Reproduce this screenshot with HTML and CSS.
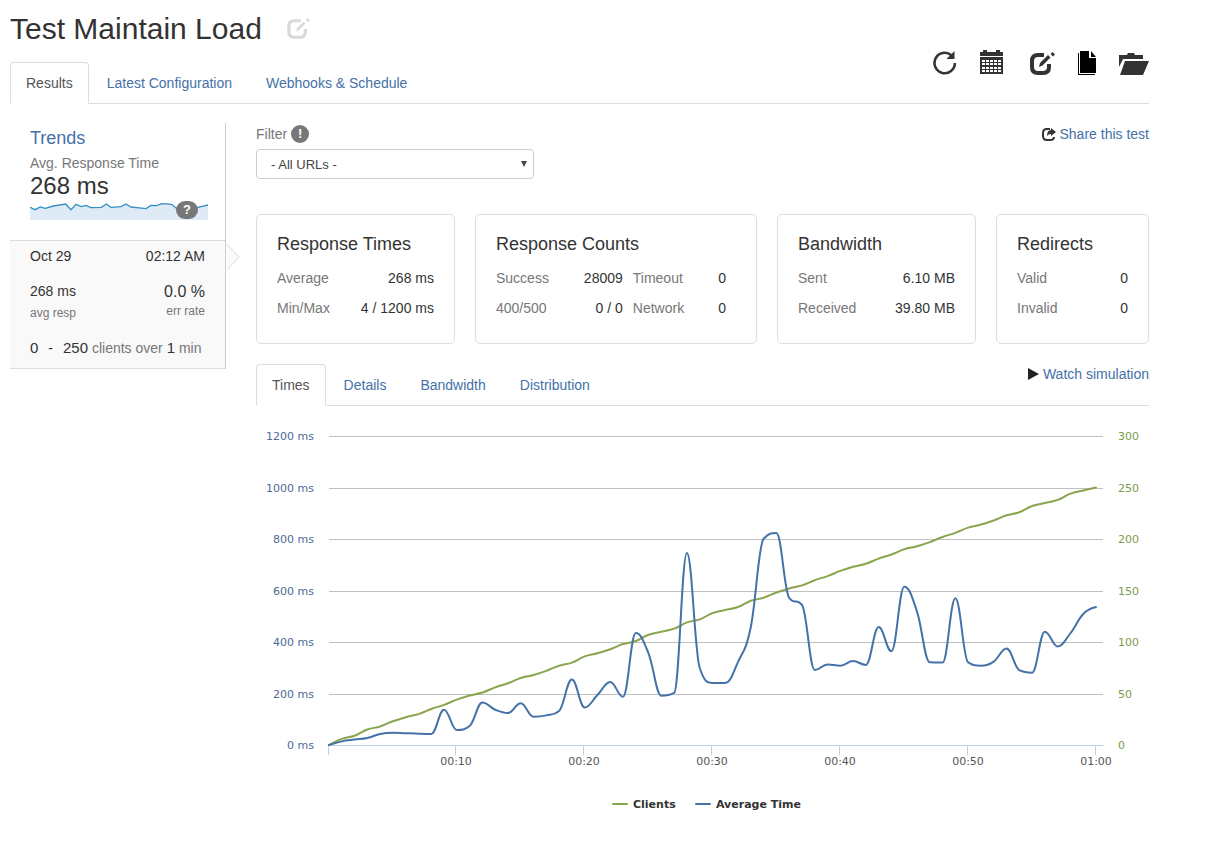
FILE: index.html
```html
<!DOCTYPE html>
<html lang="en">
<head>
<meta charset="utf-8">
<meta name="viewport" content="width=device-width, initial-scale=1">
<title>Test Maintain Load</title>
<link rel="stylesheet" href="styles.css">
</head>
<body>
<header class="page-header">
  <div class="title-row">
    <h1 class="title">Test Maintain Load</h1>
    <button class="icon-button icon-button--muted" type="button" aria-label="Edit name">
      <svg class="icon" width="25" height="22" viewBox="0 0 25 24"><path d="M15 3H8Q2 3 2 9v6q0 6 6 6h6q6 0 6-6v-3" fill="none" stroke="currentColor" stroke-width="3.500"/><path d="M10 15l1-4 7-7 2 2-7 7zM20.500 2l2-2 2.500 2.500-2 2z" fill="currentColor"/></svg>
    </button>
  </div>
  <div class="nav-row">
    <nav class="tabs">
      <a class="tab tab--active" href="#results">Results</a>
      <a class="tab" href="#config">Latest Configuration</a>
      <a class="tab" href="#webhooks">Webhooks &amp; Schedule</a>
    </nav>
    <div class="tools">
      <button class="icon-button" type="button" aria-label="Rerun">
        <svg class="icon" width="24" height="26" viewBox="0 0 24 26"><path d="M21.900 13A10.200 10.200 0 1 1 18.300 5.200" fill="none" stroke="currentColor" stroke-width="2.600"/><path d="M21.500 1v8h-8z" fill="currentColor"/></svg>
      </button>
      <button class="icon-button" type="button" aria-label="Calendar">
        <svg class="icon" width="24" height="26" viewBox="0 0 24 26"><path d="M0 2h3V0h4v2h9V0h4v2h3v4H0zM0 7h23v17H0z" fill="currentColor"/><path d="M2 10h3v2H2zM6 10h3v2H6zM10 10h3v2h-3zM14 10h3v2h-3zM18 10h3v2h-3zM2 13h3v2H2zM6 13h3v2H6zM10 13h3v2h-3zM14 13h3v2h-3zM18 13h3v2h-3zM2 17h3v2H2zM6 17h3v2H6zM10 17h3v2h-3zM14 17h3v2h-3zM18 17h3v2h-3zM2 20h3v2H2zM6 20h3v2H6zM10 20h3v2h-3zM14 20h3v2h-3zM18 20h3v2h-3z" fill="#fff"/></svg>
      </button>
      <button class="icon-button" type="button" aria-label="Edit test">
        <svg class="icon" width="28" height="26" viewBox="-3 0 28 26"><path d="M14 5H8Q2 5 2 11v6q0 6 6 6h5q6 0 6-6v-3" fill="none" stroke="currentColor" stroke-width="4"/><path d="M9 17l1-4 8-8 2.500 2.500-8 8zM20.500 4l2-2 2.500 2.500-2 2z" fill="currentColor"/></svg>
      </button>
      <button class="icon-button icon-button--black" type="button" aria-label="Copy test">
        <svg class="icon" width="18" height="26" viewBox="0 0 18 26"><path d="M2 1h9v7h7v15H2zM13 1l5 6h-5zM0 3h1v21h16v1H0z" fill="currentColor"/></svg>
      </button>
      <button class="icon-button" type="button" aria-label="Open folder">
        <svg class="icon" width="30" height="26" viewBox="0 0 30 26"><path d="M0 17V5h8l1-2h6l1 2h8v4H4zM6 11h24l-6 14H1z" fill="currentColor"/></svg>
      </button>
    </div>
  </div>
</header>

<div class="layout">
  <aside class="sidebar">
    <section class="trends">
      <h2 class="trends-title"><a href="#trends">Trends</a></h2>
      <div class="muted">Avg. Response Time</div>
      <div class="trends-value">268 ms</div>
      <div class="spark-wrap">
        <svg class="spark" viewBox="0 0 534 54" preserveAspectRatio="none">
          <path d="M0 16L15 23 31 15 46 19 70 12 107 6 123 23 138 7 153 14 168 10 183 17 214 16 229 6 243 16 273 14 288 6 303 15 348 20 363 10 380 11 395 5 425 7 445 24 470 30 504 16 534 9V54H0z" fill="#deeaf5"/>
          <path d="M0 16L15 23 31 15 46 19 70 12 107 6 123 23 138 7 153 14 168 10 183 17 214 16 229 6 243 16 273 14 288 6 303 15 348 20 363 10 380 11 395 5 425 7 445 24 470 30 504 16 534 9" fill="none" stroke="#3690c0" stroke-width="4"/>
        </svg>
        <span class="badge badge--help">?</span>
      </div>
    </section>
    <section class="run">
      <div class="run-row"><span>Oct 29</span><span>02:12 AM</span></div>
      <div class="run-row run-row--stats">
        <div><div class="run-avg">268 ms</div><div class="small muted">avg resp</div></div>
        <div class="run-err"><div class="run-rate">0.0 %</div><div class="small muted">err rate</div></div>
      </div>
      <div class="run-load"><span class="num">0</span><span>-</span><span><span class="num">250</span> <span class="muted">clients over</span> <span class="num">1</span> <span class="muted">min</span></span></div>
      <svg class="run-arrow" width="15" height="28" viewBox="0 0 15 28"><path d="M2 1L14 14 2 27" fill="#f9f9f9" stroke="#ddd"/></svg>
    </section>
  </aside>

  <main class="main">
    <div class="filter-row">
      <div class="filter">
        <label class="filter-label muted" for="url-filter">Filter <span class="badge">!</span></label>
        <div class="select-wrap">
          <select class="select" id="url-filter"><option>- All URLs -</option></select>
        </div>
      </div>
      <a class="action" href="#share"><svg class="icon" width="14" height="14" viewBox="0 0 14 14"><path d="M8 2H5Q1 2 1 6v3q0 4 4 4h3q4 0 4-3" fill="none" stroke="#333" stroke-width="2"/><path d="M9 1l5 4-5 4V7Q6 7 5 9q0-6 4-6z" fill="#333"/></svg>Share this test</a>
    </div>

    <div class="cards">
      <section class="card">
        <h3 class="card-title">Response Times</h3>
        <table class="stats">
          <tr><th scope="row">Average</th><td>268 ms</td></tr>
          <tr><th scope="row">Min/Max</th><td>4 / 1200 ms</td></tr>
        </table>
      </section>
      <section class="card">
        <h3 class="card-title">Response Counts</h3>
        <table class="stats stats--double">
          <tr><th scope="row">Success</th><td>28009</td><th scope="row">Timeout</th><td>0</td></tr>
          <tr><th scope="row">400/500</th><td>0 / 0</td><th scope="row">Network</th><td>0</td></tr>
        </table>
      </section>
      <section class="card">
        <h3 class="card-title">Bandwidth</h3>
        <table class="stats">
          <tr><th scope="row">Sent</th><td>6.10 MB</td></tr>
          <tr><th scope="row">Received</th><td>39.80 MB</td></tr>
        </table>
      </section>
      <section class="card">
        <h3 class="card-title">Redirects</h3>
        <table class="stats">
          <tr><th scope="row">Valid</th><td>0</td></tr>
          <tr><th scope="row">Invalid</th><td>0</td></tr>
        </table>
      </section>
    </div>

    <div class="nav-row nav-row--chart">
      <nav class="tabs">
        <a class="tab tab--active" href="#times">Times</a>
        <a class="tab" href="#details">Details</a>
        <a class="tab" href="#bandwidth">Bandwidth</a>
        <a class="tab" href="#distribution">Distribution</a>
      </nav>
      <a class="action action--top" href="#simulation"><svg class="icon" width="11" height="12" viewBox="0 0 11 12"><path d="M0 0l11 6-11 6z" fill="#222"/></svg>Watch simulation</a>
    </div>

    <svg class="chart" id="chart" viewBox="0 0 893 424" role="img" aria-label="Clients and average time"></svg>
  </main>
</div>
<script src="chart.js"></script>
</body>
</html>
```

FILE: styles.css
```css
* { box-sizing: border-box; }

body {
  margin: 0;
  padding: 0 62px 20px 10px;
  background: #fff;
  color: #333;
  font: 14px/20px "Liberation Sans", Arial, sans-serif;
}

a { color: #4571a8; text-decoration: none; }
h1, h2, h3 { margin: 0; font-weight: 400; }

.muted { color: #777; }
.small { font-size: 12px; line-height: 16px; }
.icon { display: block; flex: none; }

.icon-button {
  padding: 0;
  border: 0;
  background: none;
  color: #333;
  cursor: pointer;
}
.icon-button--muted { color: #d9d9d9; }
.icon-button--black { color: #000; }

.title-row {
  display: flex;
  align-items: center;
  gap: 24px;
  padding-top: 8px;
  height: 50px;
}
.title { font-size: 30px; line-height: 40px; }

.nav-row {
  display: flex;
  justify-content: space-between;
  align-items: flex-end;
  border-bottom: 1px solid #ddd;
}
.nav-row--chart { margin-top: 20px; }

.tabs { display: flex; gap: 2px; margin-bottom: -1px; }
.tab {
  padding: 10px 15px;
  border: 1px solid transparent;
  border-radius: 4px 4px 0 0;
}
.tab--active {
  border-color: #ddd #ddd #fff;
  background: #fff;
  color: #555;
}

.tools { display: flex; gap: 23px; padding-bottom: 27px; }

.layout {
  display: flex;
  align-items: flex-start;
  gap: 30px;
  padding-top: 19px;
}

.sidebar { flex: 0 0 216px; border-right: 1px solid #ccc; }
.trends { padding: 5px 17px 20px 20px; }
.trends-title { margin-bottom: 5px; font-size: 18px; line-height: 20px; }
.trends-value { margin-bottom: 3px; font-size: 24px; line-height: 26px; }
.spark-wrap { position: relative; }
.spark { display: block; width: 100%; height: 18px; }

.badge {
  display: inline-block;
  width: 18px;
  height: 18px;
  border-radius: 9px;
  background: #777;
  color: #fff;
  font-size: 13px;
  font-weight: 700;
  line-height: 18px;
  text-align: center;
}
.badge--help { position: absolute; top: -1px; right: 10px; width: 22px; }

.run {
  position: relative;
  padding: 5px 20px 10px;
  border-top: 1px solid #ddd;
  border-bottom: 1px solid #ddd;
  background: #f9f9f9;
}
.run-row { display: flex; justify-content: space-between; }
.run-row--stats { margin-top: 15px; }
.run-avg { margin-bottom: 4px; }
.run-err { text-align: right; }
.run-rate { font-size: 16px; line-height: 22px; }
.run-load { display: flex; gap: 10px; margin-top: 17px; }
.num { font-size: 15px; }
.run-arrow { position: absolute; top: 2px; left: 100%; }

.main { flex: 1; min-width: 0; }

.filter-row {
  display: flex;
  justify-content: space-between;
  align-items: flex-start;
  padding-top: 1px;
}
.filter { width: 278px; }
.filter-label { display: flex; align-items: center; gap: 4px; }
.select-wrap { position: relative; margin-top: 5px; }
.select-wrap::after {
  content: "";
  position: absolute;
  top: 12px;
  right: 7px;
  border: solid transparent;
  border-width: 6px 3px 0;
  border-top-color: #444;
  pointer-events: none;
}
.select {
  display: block;
  width: 100%;
  height: 30px;
  padding: 0 14px;
  border: 1px solid #ccc;
  border-radius: 4px;
  background: #fff;
  color: #444;
  font: 13px "Liberation Sans", Arial, sans-serif;
  appearance: none;
}

.action { display: flex; align-items: center; gap: 4px; }
.action--top { align-self: flex-start; }

.cards {
  display: grid;
  grid-template-columns: 199fr 282fr 199fr 153fr;
  gap: 20px;
  margin-top: 35px;
}
.card {
  padding: 19px 20px 20px;
  border: 1px solid #ddd;
  border-radius: 5px;
}
.card-title { margin-bottom: 9px; font-size: 18px; line-height: 20px; }

.stats { width: 100%; border-collapse: collapse; }
.stats th, .stats td { height: 30px; padding: 0; white-space: nowrap; }
.stats th { color: #777; font-weight: 400; text-align: left; }
.stats td { text-align: right; }
.stats--double { table-layout: fixed; }
.stats--double th { width: 28%; }
.stats--double td { width: 29%; padding-right: 10px; }
.stats--double td:last-child { width: 15%; }

.chart {
  display: block;
  width: 100%;
  font: 11px "DejaVu Sans", sans-serif;
}
.chart-left { fill: #4d6a96; text-anchor: end; }
.chart-right { fill: #7d9a4c; }
.chart-time { fill: #555; text-anchor: middle; }
.chart-legend { fill: #333; font-weight: 700; }
.chart-grid { stroke: #c0c0c0; }
.chart-axis { stroke: #c0d0e0; }
.chart-line { fill: none; stroke-width: 2; stroke-linejoin: round; stroke-linecap: round; }
.chart-line--clients { stroke: #89a54e; }
.chart-line--time { stroke: #4572a7; }
```

FILE: chart.js
```js
const LEFT = 73, RIGHT = 847, TOP = 30, BOTTOM = 339, LAST_X = 840;

const clients = [0, 6, 9, 15, 18, 23, 27, 30, 35, 39, 44, 48, 51, 56, 60, 65, 68, 72, 77, 80,
  86, 89, 93, 98, 101, 107, 110, 113, 119, 122, 128, 131, 134, 140, 143, 148, 152, 155, 160, 164,
  169, 173, 176, 181, 185, 190, 193, 197, 202, 206, 211, 214, 218, 223, 226, 232, 235, 238, 244, 247, 250];

const times = [0, 14, 21, 27, 43, 48, 46, 44, 43, 137, 58, 74, 165, 137, 124, 162, 110, 115, 132, 254,
  146, 194, 245, 187, 435, 355, 191, 202, 746, 299, 241, 241, 323, 459, 801, 823, 571, 544, 291, 313,
  308, 326, 311, 458, 364, 615, 518, 321, 320, 570, 321, 308, 324, 375, 291, 281, 440, 383, 434, 509, 536];

const svg = document.getElementById("chart");

function add(tag, attrs, text) {
  const el = document.createElementNS("http://www.w3.org/2000/svg", tag);
  for (const name in attrs) el.setAttribute(name, attrs[name]);
  if (text) el.textContent = text;
  svg.appendChild(el);
}

// Smooth curve whose control points never overshoot a peak or a trough.
function spline(values, max) {
  const pts = values.map((v, i) => ({
    x: LEFT + i * (LAST_X - LEFT) / (values.length - 1),
    y: BOTTOM - v / max * (BOTTOM - TOP)
  }));
  let d = `M${pts[0].x} ${pts[0].y}`;
  let out = pts[0];
  for (let i = 1; i < pts.length; i++) {
    const prev = pts[i - 1], p = pts[i], next = pts[i + 1];
    let inn = p, nextOut = p;
    if (next) {
      const lx = (1.5 * p.x + prev.x) / 2.5;
      let ly = (1.5 * p.y + prev.y) / 2.5;
      const rx = (1.5 * p.x + next.x) / 2.5;
      let ry = (1.5 * p.y + next.y) / 2.5;
      const fix = (ry - ly) * (rx - p.x) / (rx - lx) + p.y - ry;
      ly += fix;
      ry += fix;
      const loA = Math.min(prev.y, p.y), hiA = Math.max(prev.y, p.y);
      if (ly > hiA) { ly = hiA; ry = 2 * p.y - ly; }
      else if (ly < loA) { ly = loA; ry = 2 * p.y - ly; }
      const loB = Math.min(next.y, p.y), hiB = Math.max(next.y, p.y);
      if (ry > hiB) { ry = hiB; ly = 2 * p.y - ry; }
      else if (ry < loB) { ry = loB; ly = 2 * p.y - ry; }
      inn = { x: lx, y: ly };
      nextOut = { x: rx, y: ry };
    }
    d += `C${out.x} ${out.y} ${inn.x} ${inn.y} ${p.x} ${p.y}`;
    out = nextOut;
  }
  return d;
}

for (let i = 0; i <= 6; i++) {
  const y = Math.round(BOTTOM - i * (BOTTOM - TOP) / 6);
  add("path", { d: `M${LEFT} ${y + 0.5}H${RIGHT}`, class: i ? "chart-grid" : "chart-axis" });
  add("text", { x: 58, y: y + 4, class: "chart-left" }, `${i * 200} ms`);
  add("text", { x: 862, y: y + 4, class: "chart-right" }, String(i * 50));
}

["", "00:10", "00:20", "00:30", "00:40", "00:50", "01:00"].forEach((label, i) => {
  const x = Math.floor(LEFT + i * (LAST_X - LEFT) / 6);
  add("path", { d: `M${x - 0.5} ${BOTTOM}v10`, class: "chart-axis" });
  add("text", { x, y: 359, class: "chart-time" }, label);
});

add("path", { d: spline(clients, 300), class: "chart-line chart-line--clients" });
add("path", { d: spline(times, 1200), class: "chart-line chart-line--time" });

add("path", { d: "M357 398h14", class: "chart-line chart-line--clients" });
add("text", { x: 377, y: 402, class: "chart-legend" }, "Clients");
add("path", { d: "M440 398h14", class: "chart-line chart-line--time" });
add("text", { x: 460, y: 402, class: "chart-legend" }, "Average Time");
```
